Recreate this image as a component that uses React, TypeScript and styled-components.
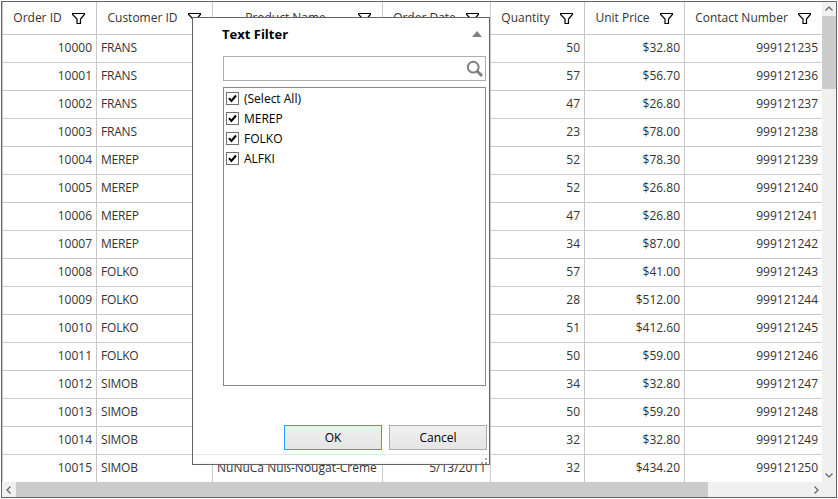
import React from 'react';
import styled, { createGlobalStyle } from 'styled-components';

const Global = createGlobalStyle`
  html, body { margin: 0; padding: 0; background: #fff; overflow: hidden; }
  * { box-sizing: border-box; }
  body { font: 12px/16px "Open Sans", "Noto Sans", sans-serif; color: #333; }
`;

const Screen = styled.div`
  position: relative;
  width: 838px;
  height: 499px;
  padding: 1px;
`;
const Frame = styled.div`
  display: grid;
  grid-template-columns: 820px 14px;
  grid-template-rows: 480px 15px;
  width: 836px;
  height: 497px;
  border: 1px solid #646464;
`;
const Grid = styled.div`
  border-left: 1px solid #c9c9c9;
  overflow: hidden;
`;
const Row = styled.div<{ $head?: boolean }>`
  display: grid;
  grid-template-columns: 94px 116px 170px 108px 94px 100px 137px;
  height: ${p => (p.$head ? 33 : 28)}px;
`;
const Cell = styled.div<{ $align?: 'left' | 'right'; $last?: boolean; $spacing?: number }>`
  display: flex;
  align-items: center;
  justify-content: ${p => (p.$align === 'left' ? 'flex-start' : 'flex-end')};
  padding: 0 4px 1px;
  border-right: ${p => (p.$last ? 0 : 1)}px solid #c9c9c9;
  border-bottom: 1px solid #c9c9c9;
  white-space: nowrap;
  letter-spacing: ${p => p.$spacing ?? 0}px;
`;
const HeadCell = styled(Cell)`
  padding: 0 11px 0 0;
`;
const HeadLabel = styled.span<{ $spacing: number }>`
  flex: 1;
  text-align: center;
  letter-spacing: ${p => p.$spacing}px;
`;

const Funnel = () => (
  <svg width="13" height="13" viewBox="0 0 13 13" fill="none" stroke="#000" strokeWidth="1.2">
    <path d="M.6 1.5h11.8v1L8.5 7v4.5H5V7L.6 2.5z" />
  </svg>
);

const VBar = styled.div`
  display: grid;
  grid-template-rows: 14px 73px 1fr 14px;
  background: #f0f0f0;
`;
const HBar = styled.div`
  grid-column: 1 / 3;
  display: grid;
  grid-template-columns: 14px 692px 1fr 14px;
  background: #f0f0f0;
`;
const Thumb = styled.div`
  background: #cbcbcb;
`;
const ArrowBox = styled.div<{ $last?: boolean; $wide?: boolean }>`
  display: flex;
  align-items: center;
  justify-content: center;
  grid-row: ${p => (p.$last && !p.$wide ? 4 : 'auto')};
  grid-column: ${p => (p.$last && p.$wide ? 4 : 'auto')};
  padding-right: ${p => (p.$last && p.$wide ? 0 : 0)}px;
`;
const CornerArrow = styled.div`
  grid-column: 4;
  display: flex;
  align-items: center;
  margin-left: -11px;
`;
const Chevron = ({ d }: { d: string }) => (
  <svg width="10" height="10" viewBox="0 0 10 10" fill="none" stroke="#606060" strokeWidth="1.2">
    <path d={d} />
  </svg>
);

const Popup = styled.div`
  position: absolute;
  left: 192px;
  top: 17px;
  width: 298px;
  height: 448px;
  display: flex;
  flex-direction: column;
  border: 1px solid #646464;
  background: #fff;
  color: #000;
`;
const Title = styled.div`
  display: flex;
  align-items: center;
  justify-content: space-between;
  height: 38px;
  padding: 0 7px 7px 29px;
  font-size: 13px;
  font-weight: 700;
`;
const Search = styled.div`
  display: flex;
  justify-content: flex-end;
  align-items: center;
  height: 25px;
  margin: 0 3px 6px 30px;
  border: 1px solid #abadb3;
  padding-right: 1px;
`;
const List = styled.div`
  height: 299px;
  margin: 0 3px 0 30px;
  padding: 0 2px;
  border: 1px solid #828790;
`;
const Option = styled.label<{ $spacing: number }>`
  display: flex;
  align-items: center;
  gap: 5px;
  height: 20px;
  padding-top: 1px;
  letter-spacing: ${p => p.$spacing}px;
`;
const Box = styled.span`
  display: flex;
  width: 13px;
  height: 13px;
  border: 1px solid #707070;
`;
const Actions = styled.div`
  display: flex;
  justify-content: flex-end;
  gap: 7px;
  margin: 39px 2px 0 0;
`;
const Button = styled.button<{ $primary?: boolean }>`
  width: 98px;
  height: 25px;
  padding: 1px 0 0;
  border: 1px solid ${p => (p.$primary ? '#3399ff' : '#acacac')};
  background: linear-gradient(#f0f0f0, #e5e5e5);
  font: 12px/16px "Open Sans", sans-serif;
  color: #000;
`;
const Footer = styled.div`
  display: flex;
  justify-content: flex-end;
  align-items: flex-end;
  height: 10px;
  margin-top: 4px;
  padding-right: 2px;
  border-top: 1px solid #dfe9ee;
  background: linear-gradient(#fff 75%, #f2f2f2);
`;

const HEADS: [string, number][] = [
  ['Order ID', 0], ['Customer ID', 0], ['Product Name', 0], ['Order Date', 0],
  ['Quantity', 0], ['Unit Price', 0], ['Contact Number', 0],
];
const CUSTOMERS = ['FRANS', 'FRANS', 'FRANS', 'FRANS', 'MEREP', 'MEREP', 'MEREP', 'MEREP',
  'FOLKO', 'FOLKO', 'FOLKO', 'FOLKO', 'SIMOB', 'SIMOB', 'SIMOB', 'SIMOB'];
const QUANTITIES = [50, 57, 47, 23, 52, 52, 47, 34, 57, 28, 51, 50, 34, 50, 32, 32];
const PRICES = ['32.80', '56.70', '26.80', '78.00', '78.30', '26.80', '26.80', '87.00',
  '41.00', '512.00', '412.60', '59.00', '32.80', '59.20', '32.80', '434.20'];
const OPTIONS: [string, number][] = [['(Select All)', 0], ['MEREP', 0], ['FOLKO', 0], ['ALFKI', 0]];

export default function App() {
  return (
    <Screen>
      <Global />
      <Frame>
        <Grid>
          <Row $head>
            {HEADS.map(([h, s], i) => (
              <HeadCell key={h} $last={i === 6}>
                <HeadLabel $spacing={s}>{h}</HeadLabel>
                <Funnel />
              </HeadCell>
            ))}
          </Row>
          {CUSTOMERS.map((c, i) => (
            <Row key={i}>
              <Cell>{10000 + i}</Cell>
              <Cell $align="left" $spacing={-0.2}>{c}</Cell>
              <Cell $align="left">{i === 15 ? 'NuNuCa Nuß-Nougat-Creme' : ''}</Cell>
              <Cell>{i === 15 ? '5/13/2011' : ''}</Cell>
              <Cell>{QUANTITIES[i]}</Cell>
              <Cell>${PRICES[i]}</Cell>
              <Cell $last>{999121235 + i}</Cell>
            </Row>
          ))}
        </Grid>
        <VBar>
          <ArrowBox><Chevron d="M1.5 6.5 5 3l3.5 3.5" /></ArrowBox>
          <Thumb />
          <ArrowBox $last><Chevron d="M1.5 3.5 5 7l3.5-3.5" /></ArrowBox>
        </VBar>
        <HBar>
          <ArrowBox><Chevron d="M6.5 1.5 3 5l3.5 3.5" /></ArrowBox>
          <Thumb />
          <CornerArrow><Chevron d="M3.5 1.5 7 5 3.5 8.5" /></CornerArrow>
        </HBar>
      </Frame>
      <Popup>
        <Title>
          Text Filter
          <svg width="10" height="6" viewBox="0 0 10 6"><path d="M0 6 5 0l5 6z" fill="#808080" /></svg>
        </Title>
        <Search>
          <svg width="18" height="18" viewBox="0 0 18 18" fill="none" stroke="#808080">
            <circle cx="7.2" cy="7.2" r="5.4" strokeWidth="2" />
            <path d="m11 11 5 4.8" strokeWidth="3" />
          </svg>
        </Search>
        <List>
          {OPTIONS.map(([o, s]) => (
            <Option key={o} $spacing={s}>
              <Box>
                <svg width="11" height="11" viewBox="0 0 11 11" fill="none" stroke="#000" strokeWidth="2">
                  <path d="M2 5.2 4.4 8 9 2.5" />
                </svg>
              </Box>
              {o}
            </Option>
          ))}
        </List>
        <Actions>
          <Button $primary>OK</Button>
          <Button>Cancel</Button>
        </Actions>
        <Footer>
          <svg width="6" height="6" viewBox="0 0 6 6" fill="#a5a5a5">
            <path d="M4 0h2v2H4zM0 4h2v2H0zM4 4h2v2H4z" />
          </svg>
        </Footer>
      </Popup>
    </Screen>
  );
}
